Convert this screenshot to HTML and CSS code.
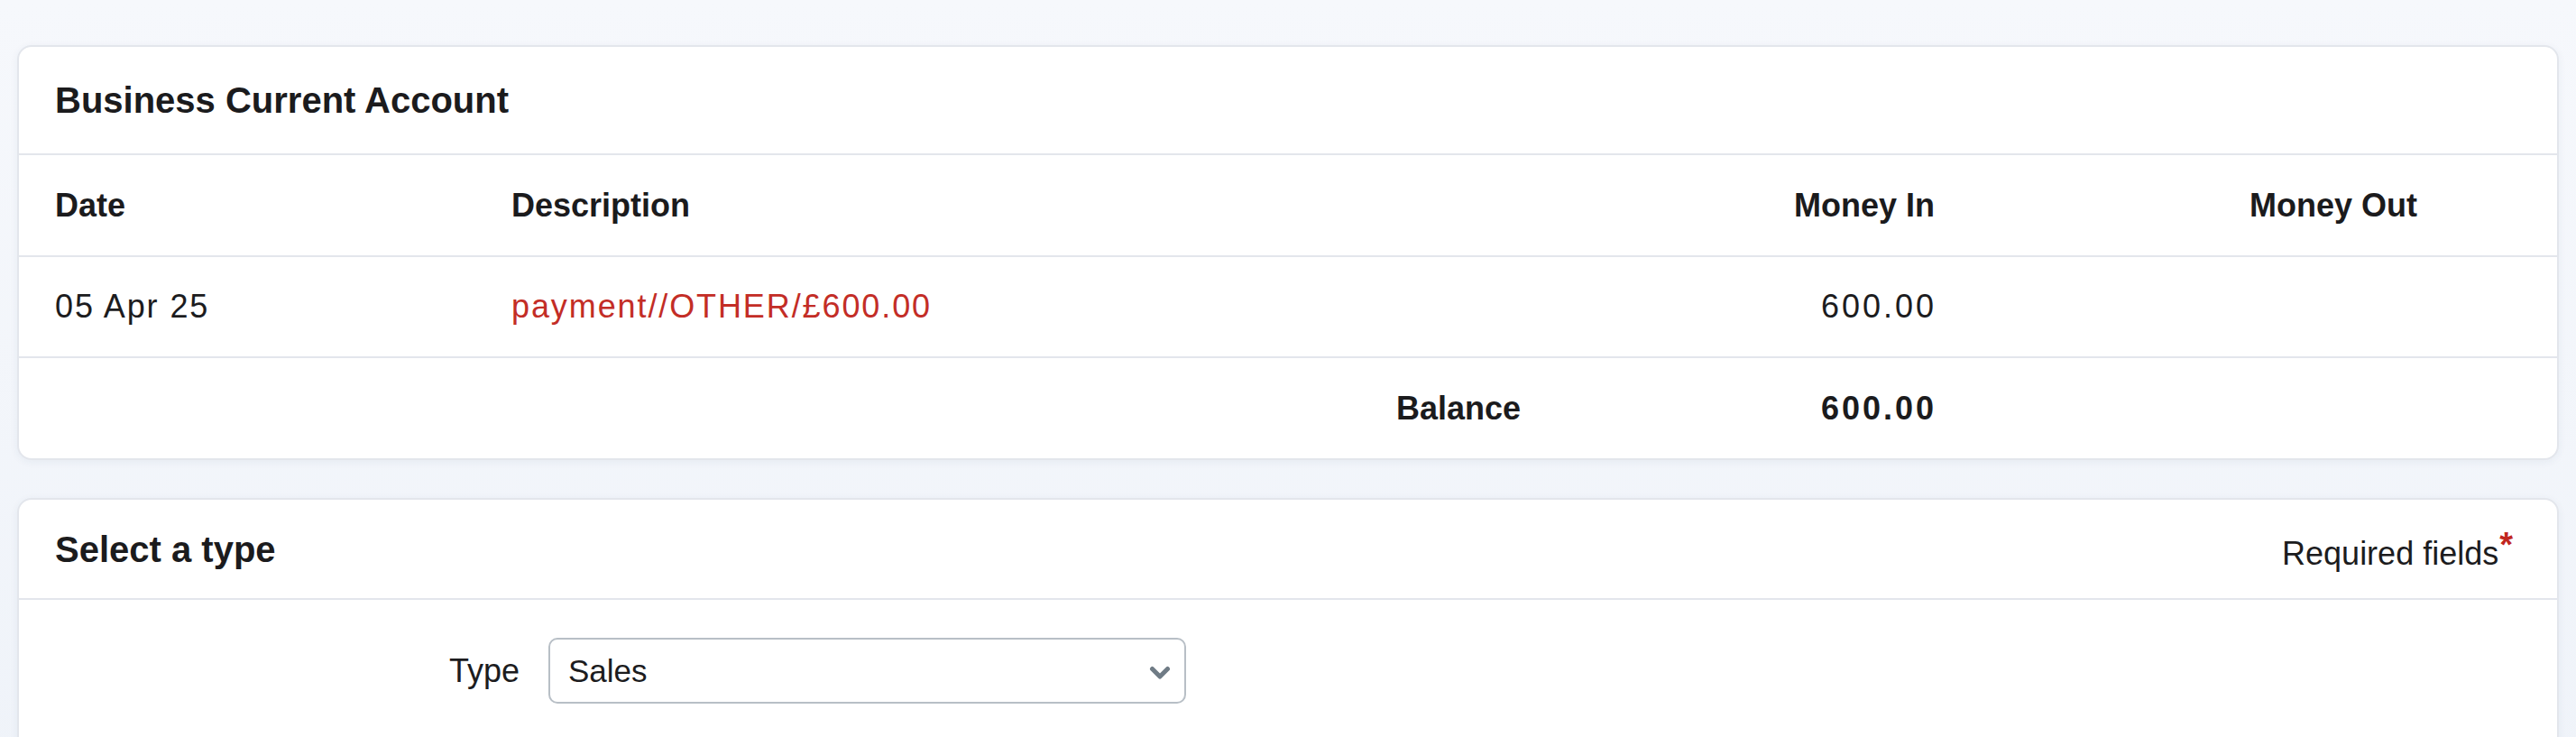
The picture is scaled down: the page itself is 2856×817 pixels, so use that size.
FILE: index.html
```html
<!DOCTYPE html>
<html lang="en">
<head>
<meta charset="utf-8">
<title>Business Current Account</title>
<link rel="stylesheet" href="styles.css">
</head>
<body>
<main class="page">
  <section class="card">
    <header class="card-head">
      <h2 class="card-title">Business Current Account</h2>
    </header>
    <table class="ledger">
      <colgroup>
        <col class="c-date">
        <col class="c-desc">
        <col class="c-in">
        <col class="c-out">
        <col class="c-pad">
      </colgroup>
      <thead>
        <tr>
          <th class="left">Date</th>
          <th class="left">Description</th>
          <th class="right">Money In</th>
          <th class="right">Money Out</th>
          <th></th>
        </tr>
      </thead>
      <tbody>
        <tr>
          <td class="wide">05 Apr 25</td>
          <td class="wide"><a class="txn-link" href="#">payment//OTHER/£600.00</a></td>
          <td class="right num">600.00</td>
          <td class="right"></td>
          <td></td>
        </tr>
        <tr class="balance">
          <td></td>
          <td class="right strong">Balance</td>
          <td class="right strong num">600.00</td>
          <td></td>
          <td></td>
        </tr>
      </tbody>
    </table>
  </section>

  <section class="card card-form">
    <header class="card-head head-split">
      <h2 class="card-title">Select a type</h2>
      <span class="required-note">Required fields<span class="req">*</span></span>
    </header>
    <div class="form-body">
      <div class="form-row">
        <label class="form-label" for="type">Type</label>
        <div class="select-wrap">
          <select id="type" class="select">
            <option>Sales</option>
            <option>Purchases</option>
            <option>Transfer</option>
          </select>
          <svg class="chevron" viewBox="0 0 24 16" aria-hidden="true">
            <path d="M3.5 3.5 L12 12 L20.5 3.5" fill="none" stroke="#6f7b85" stroke-width="5" stroke-linecap="round" stroke-linejoin="round"/>
          </svg>
        </div>
      </div>
    </div>
  </section>
</main>
</body>
</html>
```

FILE: styles.css
```css
* {
  box-sizing: border-box;
}

html, body {
  margin: 0;
  padding: 0;
}

body {
  background: linear-gradient(180deg, #f6f8fc 0%, #eff3f9 100%);
  font-family: "Liberation Sans", Arial, sans-serif;
  color: #1c1c1e;
  font-size: 36px;
}

.page {
  padding: 50px 19px 40px;
  display: flex;
  flex-direction: column;
  gap: 42px;
}

.card {
  background: #ffffff;
  border: 2px solid #e3e6ec;
  border-radius: 16px;
  box-shadow: 0 2px 10px rgba(40, 60, 110, 0.06);
  overflow: hidden;
}

.card-head {
  height: 120px;
  padding: 0 40px;
  display: flex;
  align-items: center;
  border-bottom: 2px solid #e3e6ec;
}

.card-title {
  margin: 0;
  font-size: 40px;
  font-weight: 700;
  color: #1b1b1d;
  line-height: 1;
}

.ledger {
  width: 100%;
  border-collapse: collapse;
  table-layout: fixed;
}

.c-date { width: 506px; }
.c-desc { width: 1199px; }
.c-in { width: 459px; }
.c-out { width: 535px; }
.c-pad { width: auto; }

.ledger th,
.ledger td {
  height: 112px;
  padding: 0 40px;
  vertical-align: middle;
  line-height: 1.2;
  font-size: 36px;
  white-space: nowrap;
}

.ledger th {
  font-weight: 700;
  color: #1b1b1d;
}

.ledger thead tr,
.ledger tbody tr {
  border-bottom: 2px solid #e3e6ec;
}

.ledger tbody tr:last-child {
  border-bottom: none;
}

.ledger td {
  font-weight: 400;
  color: #1c1c1e;
}

.ledger td.wide {
  letter-spacing: 1.9px;
}

.ledger td.num {
  letter-spacing: 3px;
  padding-right: 38px;
}

.left { text-align: left; }
.right { text-align: right; }

.ledger td.strong {
  font-weight: 700;
  color: #1b1b1d;
}

.txn-link {
  color: #c32d26;
  text-decoration: none;
}

.head-split {
  height: 111px;
  justify-content: space-between;
  padding-right: 49px;
}

.required-note {
  font-size: 36px;
  color: #1c1c1e;
  line-height: 1;
}

.req {
  color: #c1261f;
  font-weight: 700;
  font-size: 38px;
  vertical-align: 9px;
  margin-left: 1px;
}

.form-body {
  padding: 42px 42px 60px;
}

.form-row {
  display: grid;
  grid-template-columns: 513px 707px;
  column-gap: 32px;
  align-items: center;
}

.form-label {
  text-align: right;
  font-size: 36px;
  color: #1c1c1e;
}

.select-wrap {
  position: relative;
  width: 707px;
  height: 73px;
}

.select {
  appearance: none;
  -webkit-appearance: none;
  width: 100%;
  height: 100%;
  border: 2px solid #b8bfc6;
  border-radius: 10px;
  background: #ffffff;
  padding: 0 60px 0 20px;
  font-family: "Liberation Sans", Arial, sans-serif;
  font-size: 35px;
  color: #1c1c1e;
  outline: none;
}

.chevron {
  position: absolute;
  right: 17px;
  top: 31px;
  width: 24px;
  height: 16px;
  pointer-events: none;
}
```
